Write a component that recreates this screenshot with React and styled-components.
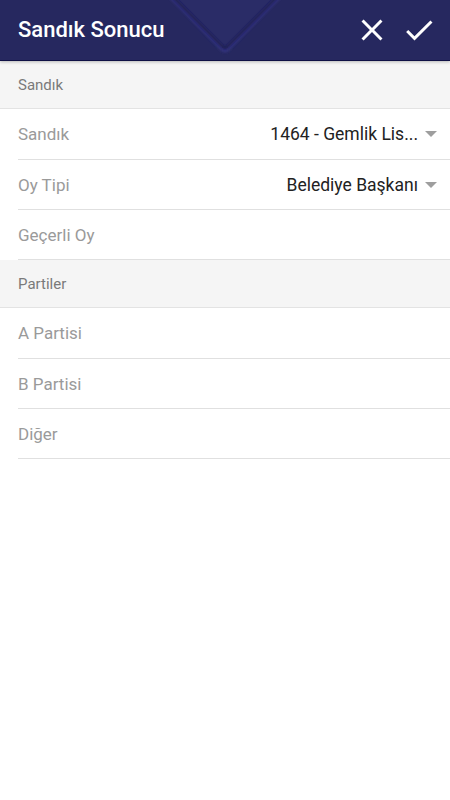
import React from "react";
import styled, { createGlobalStyle } from "styled-components";

const GlobalStyle = createGlobalStyle`
  html, body { margin: 0; padding: 0; background: #ffffff; }
  body { font-family: Roboto, "Noto Sans", "Liberation Sans", sans-serif; }
  * { box-sizing: border-box; }
`;

const Page = styled.div`
  width: 450px;
  min-height: 800px;
  background: #ffffff;
`;

const AppBar = styled.header`
  position: relative;
  z-index: 2;
  height: 61px;
  background: #26285f;
  border-bottom: 1px solid #0f1045;
  box-shadow: 0 1px 3px rgba(0, 0, 0, 0.25);
  display: flex;
  align-items: center;
  padding: 0 13px 0 18px;
  overflow: hidden;
`;

const Decor = styled.svg`
  position: absolute;
  left: 160px;
  top: 0;
  pointer-events: none;
`;

const Title = styled.h1`
  position: relative;
  margin: 0;
  flex: 1;
  color: #ffffff;
  font-size: 22px;
  font-weight: 500;
  line-height: 1;
`;

const Actions = styled.div`
  position: relative;
  display: flex;
  gap: 11px;
  align-items: center;
`;

const IconButton = styled.button`
  width: 36px;
  height: 36px;
  padding: 0;
  border: 0;
  background: transparent;
  display: flex;
  align-items: center;
  justify-content: center;
  cursor: pointer;
`;

const SectionHeader = styled.div`
  height: 48px;
  background: #f5f5f5;
  border-bottom: 1px solid #e3e3e3;
  display: flex;
  align-items: center;
  padding-left: 18px;
  font-size: 15px;
  color: #7a7a7a;
`;

const Row = styled.div`
  height: ${(p) => (p.$first ? "51px" : "50px")};
  margin-left: 18px;
  border-bottom: 1px solid #e0e0e0;
  display: flex;
  align-items: center;
  justify-content: space-between;
  padding-right: 13px;
`;

const Label = styled.span`
  font-size: 17px;
  color: #9a9a9a;
`;

const Spinner = styled.div`
  display: flex;
  align-items: center;
  gap: 7px;
`;

const Value = styled.span`
  font-size: 17.5px;
  color: #222222;
`;

const Caret = styled.span`
  width: 0;
  height: 0;
  border-left: 6px solid transparent;
  border-right: 6px solid transparent;
  border-top: 6px solid #9e9e9e;
`;

const CloseIcon = () => (
  <svg width="36" height="36" viewBox="0 0 24 24">
    <path
      fill="#ffffff"
      d="M19 6.41L17.59 5 12 10.59 6.41 5 5 6.41 10.59 12 5 17.59 6.41 19 12 13.41 17.59 19 19 17.59 13.41 12z"
    />
  </svg>
);

const CheckIcon = () => (
  <svg width="36" height="36" viewBox="0 0 24 24">
    <path fill="#ffffff" d="M9 16.17L4.83 12l-1.42 1.41L9 19 21 7l-1.41-1.41z" />
  </svg>
);

const HeaderDecor = () => (
  <Decor width="130" height="60" viewBox="0 0 130 60">
    <defs>
      <filter id="blur" x="-20%" y="-20%" width="140%" height="140%">
        <feGaussianBlur stdDeviation="1.2" />
      </filter>
    </defs>
    <path d="M10 -6 L62 46 Q65 49 68 46 L120 -6 Z" fill="#2a2c67" />
    <path
      d="M10 -4 L62 49 Q65 52 68 49 L120 -4"
      fill="none"
      stroke="#30327a"
      strokeWidth="4"
      filter="url(#blur)"
    />
    <path
      d="M12 -4 L62 46 Q65 49 68 46 L118 -4"
      fill="none"
      stroke="#1b1c50"
      strokeWidth="2"
      filter="url(#blur)"
    />
  </Decor>
);

const LabelRow = ({ label, first }) => (
  <Row $first={first}>
    <Label>{label}</Label>
  </Row>
);

const SpinnerRow = ({ label, value, first }) => (
  <Row $first={first}>
    <Label>{label}</Label>
    <Spinner>
      <Value>{value}</Value>
      <Caret />
    </Spinner>
  </Row>
);

export default function App() {
  return (
    <Page>
      <GlobalStyle />
      <AppBar>
        <HeaderDecor />
        <Title>Sandık Sonucu</Title>
        <Actions>
          <IconButton aria-label="Kapat">
            <CloseIcon />
          </IconButton>
          <IconButton aria-label="Kaydet">
            <CheckIcon />
          </IconButton>
        </Actions>
      </AppBar>
      <SectionHeader>Sandık</SectionHeader>
      <SpinnerRow first label="Sandık" value="1464 - Gemlik Lis..." />
      <SpinnerRow label="Oy Tipi" value="Belediye Başkanı" />
      <LabelRow label="Geçerli Oy" />
      <SectionHeader>Partiler</SectionHeader>
      <LabelRow first label="A Partisi" />
      <LabelRow label="B Partisi" />
      <LabelRow label="Diğer" />
    </Page>
  );
}
